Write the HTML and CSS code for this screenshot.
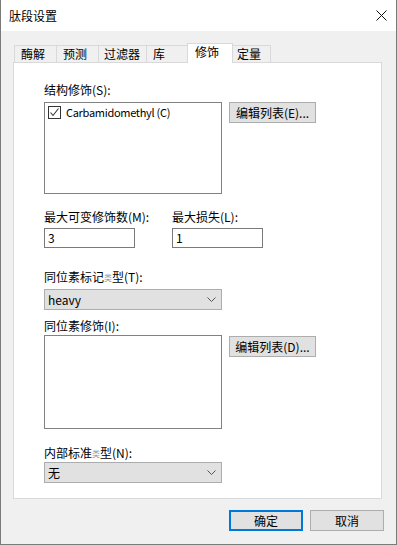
FILE: index.html
```html
<!DOCTYPE html>
<html lang="zh-CN">
<head>
  <meta charset="UTF-8" />
  <title>肽段设置</title>
  <link rel="stylesheet" href="styles.css">
</head>
<body>
  <div class="dialog">
    <div class="titlebar">
      <span class="title">肽段设置</span>
      <svg class="close" width="11" height="11" viewBox="0 0 11 11">
        <path d="M0.5 0.5L10.5 10.5M10.5 0.5L0.5 10.5" stroke="#111" stroke-width="1" fill="none"/>
      </svg>
    </div>

    <div class="client">
      <!-- Tab strip -->
      <div class="tabs">
        <div class="tab">酶解</div>
        <div class="tab">预测</div>
        <div class="tab">过滤器</div>
        <div class="tab">库</div>
        <div class="tab active">修饰</div>
        <div class="tab">定量</div>
      </div>

      <div class="panel">
        <div class="label">结构修饰(S):</div>
        <div class="row">
          <div class="listbox">
            <div class="check-item">
              <span class="checkbox">
                <svg width="11" height="11" viewBox="0 0 11 11">
                  <path d="M1.5 5.5L4 8.5L9.5 1.5" stroke="#333" stroke-width="1.1" fill="none"/>
                </svg>
              </span>
              <span class="item-text">Carbamidomethyl (C)</span>
            </div>
          </div>
          <button class="btn">编辑列表(E)...</button>
        </div>

        <div class="pair">
          <div class="col">
            <div class="label">最大可变修饰数(M):</div>
            <div class="textbox">3</div>
          </div>
          <div class="col">
            <div class="label">最大损失(L):</div>
            <div class="textbox">1</div>
          </div>
        </div>

        <div class="label label-t">同位素标记<span class="faint">类</span>型(T):</div>
        <div class="combo">
          <span>heavy</span>
          <svg width="9" height="5" viewBox="0 0 9 5"><path d="M0.5 0.5L4.5 4.5L8.5 0.5" stroke="#555" fill="none"/></svg>
        </div>

        <div class="label label-i">同位素修饰(I):</div>
        <div class="row row-i">
          <div class="listbox listbox-i"></div>
          <button class="btn btn-d">编辑列表(D)...</button>
        </div>

        <div class="label label-n">内部标准<span class="faint">类</span>型(N):</div>
        <div class="combo">
          <span>无</span>
          <svg width="9" height="5" viewBox="0 0 9 5"><path d="M0.5 0.5L4.5 4.5L8.5 0.5" stroke="#555" fill="none"/></svg>
        </div>
      </div>

      <!-- Dialog buttons -->
      <div class="actions">
        <button class="btn btn-ok">确定</button>
        <button class="btn btn-cancel">取消</button>
      </div>
    </div>
  </div>
</body>
</html>
```

FILE: styles.css
```css
* {
  box-sizing: border-box;
}

body {
  margin: 0;
  font-family: "Noto Sans CJK SC", "Noto Sans", sans-serif;
  font-size: 12px;
  color: #000;
}

.dialog {
  width: 397px;
  height: 545px;
  border: 1px solid #7a7a7a;
  border-top: 0;
  display: flex;
  flex-direction: column;
}

.titlebar {
  height: 31px;
  background: #fff;
  display: flex;
  align-items: center;
  justify-content: space-between;
  padding: 0 9px 0 8px;
}

.title {
  line-height: 16px;
  margin-top: 1px;
}

.client {
  flex: 1;
  background: #f0f0f0;
  padding: 12px 12px 0 12px;
}

.tabs {
  display: flex;
  align-items: flex-end;
  height: 19px;
  margin-left: 1px;
}

.tab {
  height: 17px;
  border: 1px solid #d9d9d9;
  border-bottom: 0;
  border-right: 0;
  background: #f0f0f0;
  padding-left: 6px;
  line-height: 16px;
  white-space: nowrap;
}

.tab:nth-child(1) { width: 42px; }
.tab:nth-child(2) { width: 42px; padding-left: 6px; }
.tab:nth-child(3) { width: 48px; padding-left: 5px; }
.tab:nth-child(4) { width: 41px; padding-left: 6px; }

.tab.active {
  width: 46px;
  height: 20px;
  border-right: 1px solid #d9d9d9;
  background: #fff;
  padding-left: 7px;
  line-height: 15px;
  margin-bottom: -1px;
  position: relative;
  z-index: 1;
}

.tab:nth-child(6) {
  width: 38px;
  border-left: 0;
  border-right: 1px solid #d9d9d9;
  padding-left: 4px;
}

.panel {
  width: 369px;
  height: 437px;
  border: 1px solid #d9d9d9;
  background: #fff;
  padding: 19px 0 0 30px;
}

.label {
  line-height: 16px;
  white-space: nowrap;
}

.faint {
  font-size: 8px;
  color: #999;
  vertical-align: 1px;
}

.row {
  display: flex;
  align-items: flex-start;
  gap: 7px;
  margin-top: 4px;
}

.listbox {
  width: 178px;
  height: 92px;
  border: 1px solid #828282;
  background: #fff;
  padding: 2px 0 0 3px;
}

.check-item {
  display: flex;
  align-items: center;
  gap: 5px;
  line-height: 14px;
}

.item-text {
  font-size: 11px;
  letter-spacing: -0.3px;
}

.checkbox {
  width: 13px;
  height: 13px;
  border: 1px solid #333;
  display: flex;
  align-items: center;
  justify-content: center;
}

.btn {
  font-family: "Noto Sans CJK SC", "Noto Sans", sans-serif;
  font-size: 12px;
  color: #000;
  background: #e1e1e1;
  border: 1px solid #adadad;
  height: 21px;
  width: 87px;
  padding: 0;
  line-height: 18px;
}

.pair {
  display: flex;
  margin-top: 15px;
}

.col {
  width: 128px;
}

.textbox {
  width: 91px;
  height: 20px;
  margin-top: 3px;
  border: 1px solid #7a7a7a;
  padding-left: 3px;
  line-height: 17px;
}

.label-t {
  margin-top: 21px;
}

.combo {
  width: 178px;
  height: 21px;
  margin-top: 3px;
  border: 1px solid #adadad;
  background: #e1e1e1;
  display: flex;
  align-items: center;
  justify-content: space-between;
  padding: 0 5px 0 3px;
  line-height: 18px;
}

.label-i {
  margin-top: 8px;
}

.row-i {
  margin-top: 1px;
}

.listbox-i {
  height: 94px;
}

.btn-d {
  margin-top: 1px;
}

.label-n {
  margin-top: 16px;
}

.label-n + .combo {
  margin-top: 0;
}

.actions {
  display: flex;
  justify-content: flex-end;
  gap: 7px;
  margin-top: 11px;
}

.btn-ok,
.btn-cancel {
  width: 74px;
}

.btn-ok {
  border: 2px solid #0078d7;
  line-height: 17px;
}
```
